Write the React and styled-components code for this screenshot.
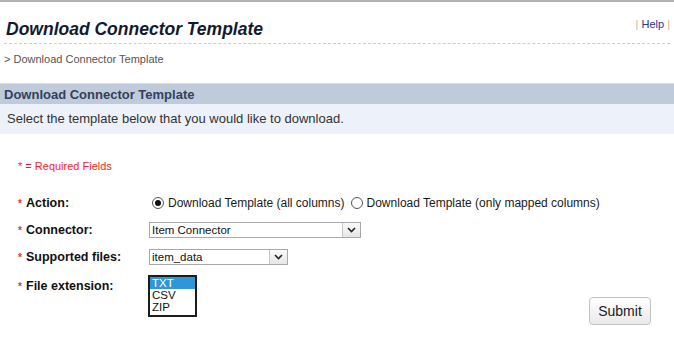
import styled, { createGlobalStyle } from "styled-components"

const GlobalStyle = createGlobalStyle`
    body {
        margin: 0;
        background: #fff;
        font-family: "Liberation Sans", Arial, sans-serif;
    }
`

const actions = [
    { label: "Download Template (all columns)", checked: true },
    { label: "Download Template (only mapped columns)", checked: false },
]

const extensions = ["TXT", "CSV", "ZIP"]

export default function App () {
    return (
        <Page>
            <GlobalStyle />
            <Header>
                <Title>Download Connector Template</Title>
                <HelpLinks>
                    <Pipe>|</Pipe> <HelpLink>Help</HelpLink> <Pipe>|</Pipe>
                </HelpLinks>
            </Header>
            <Breadcrumb>&gt; Download Connector Template</Breadcrumb>

            <SectionTitle>Download Connector Template</SectionTitle>
            <Intro>Select the template below that you would like to download.</Intro>

            <Form>
                <RequiredNote>* = Required Fields</RequiredNote>

                <Row>
                    <Label><Star>*</Star>Action:</Label>
                    <RadioGroup>
                        {actions.map((a) => (
                            <RadioOption key={a.label}>
                                <Radio checked={a.checked} />
                                {a.label}
                            </RadioOption>
                        ))}
                    </RadioGroup>
                </Row>

                <Row>
                    <Label><Star>*</Star>Connector:</Label>
                    <Select width={212}>
                        <SelectValue>Item Connector</SelectValue>
                        <SelectArrow><Chevron /></SelectArrow>
                    </Select>
                </Row>

                <Row>
                    <Label><Star>*</Star>Supported files:</Label>
                    <Select width={139}>
                        <SelectValue>item_data</SelectValue>
                        <SelectArrow><Chevron /></SelectArrow>
                    </Select>
                </Row>

                <LastRow>
                    <Label top={4}><Star>*</Star>File extension:</Label>
                    <ListBox>
                        {extensions.map((ext, i) => (
                            <ListOption key={ext} selected={i === 0}>{ext}</ListOption>
                        ))}
                    </ListBox>
                    <SubmitButton>Submit</SubmitButton>
                </LastRow>
            </Form>
        </Page>
    )
}

function Chevron () {
    return (
        <svg width="9" height="6" viewBox="0 0 9 6">
            <path d="M1 1 L4.5 4.5 L8 1" fill="none" stroke="#222" strokeWidth="1.6" />
        </svg>
    )
}

const Page = styled.div`
    width: 674px;
    height: 344px;
    border-top: 2px solid #b3b3b3;
    box-sizing: border-box;
    color: #222;
`

const Header = styled.div`
    display: flex;
    justify-content: space-between;
    align-items: flex-start;
    margin: 0 4px;
    padding: 17px 0 4px 2px;
    border-bottom: 1px dashed #c6cde0;
`

const Title = styled.h1`
    margin: 0;
    font-size: 17.5px;
    font-weight: bold;
    font-style: italic;
    color: #141a2e;
    line-height: 20px;
`

const HelpLinks = styled.div`
    font-size: 11px;
    margin-top: -1px;
    white-space: pre;
`

const Pipe = styled.span`
    color: #e3a59a;
`

const HelpLink = styled.span`
    color: #23359e;
`

const Breadcrumb = styled.div`
    font-size: 11px;
    color: #555;
    padding: 9px 4px 0;
    height: 30px;
`

const SectionTitle = styled.div`
    background: #bfcbdb;
    border-top: 1px solid #d7deea;
    font-size: 13px;
    font-weight: bold;
    color: #34405c;
    padding: 3px 4px 2px;
    height: 15px;
    line-height: 15px;
`

const Intro = styled.div`
    background: #edf1fa;
    font-size: 13px;
    color: #333;
    padding: 8px 7px 8px;
    height: 14px;
    line-height: 14px;
`

const Form = styled.div`
    padding: 26px 23px 0 18px;
`

const RequiredNote = styled.div`
    color: #ff1a1a;
    font-size: 11px;
    margin-bottom: 17px;
`

const Row = styled.div`
    display: flex;
    align-items: center;
    height: 27px;
`

const LastRow = styled.div`
    display: flex;
    align-items: flex-start;
    margin-top: 5px;
`

const Label = styled.div`
    width: 131px;
    flex-shrink: 0;
    margin-top: ${props => props.top || 0}px;
    font-size: 12.5px;
    font-weight: bold;
    color: #111;
    display: flex;
    align-items: baseline;
`

const Star = styled.span`
    color: #e8342c;
    font-size: 10px;
    width: 8px;
`

const RadioGroup = styled.div`
    display: flex;
    gap: 6px;
    margin-left: 3px;
`

const RadioOption = styled.label`
    display: flex;
    align-items: center;
    gap: 4px;
    font-size: 12px;
    color: #1a1a1a;
`

const Radio = styled.span`
    width: 12px;
    height: 12px;
    border-radius: 50%;
    border: 1px solid #555;
    background: #fff;
    position: relative;
    box-sizing: border-box;
    &::after {
        content: "";
        display: ${props => props.checked ? "block" : "none"};
        position: absolute;
        inset: 2px;
        border-radius: 50%;
        background: #111;
    }
`

const Select = styled.div`
    display: flex;
    width: ${props => props.width}px;
    height: 16px;
    border: 1px solid #a9a9a9;
    box-sizing: border-box;
    background: #fff;
`

const SelectValue = styled.div`
    flex: 1;
    font-size: 11.5px;
    line-height: 14px;
    padding-left: 2px;
    color: #111;
`

const SelectArrow = styled.div`
    width: 17px;
    border-left: 1px solid #c8c8c8;
    background: linear-gradient(#fafafa, #e6e6e6);
    display: flex;
    align-items: center;
    justify-content: center;
`

const ListBox = styled.div`
    width: 49px;
    border: 2px solid #1c1c1c;
    box-sizing: border-box;
    background: #fff;
    margin-left: -1px;
    padding-bottom: 2px;
`

const ListOption = styled.div`
    font-size: 11.5px;
    line-height: 12px;
    padding-left: 2px;
    background: ${props => props.selected ? "#2f97d8" : "transparent"};
    color: ${props => props.selected ? "#fff" : "#111"};
`

const SubmitButton = styled.button`
    margin-left: auto;
    margin-top: 22px;
    width: 62px;
    height: 28px;
    border: 1px solid #c2c2c2;
    border-radius: 4px;
    background: linear-gradient(#ffffff, #e9e9e9);
    font-family: "Liberation Sans", Arial, sans-serif;
    font-size: 14px;
    color: #222;
`
